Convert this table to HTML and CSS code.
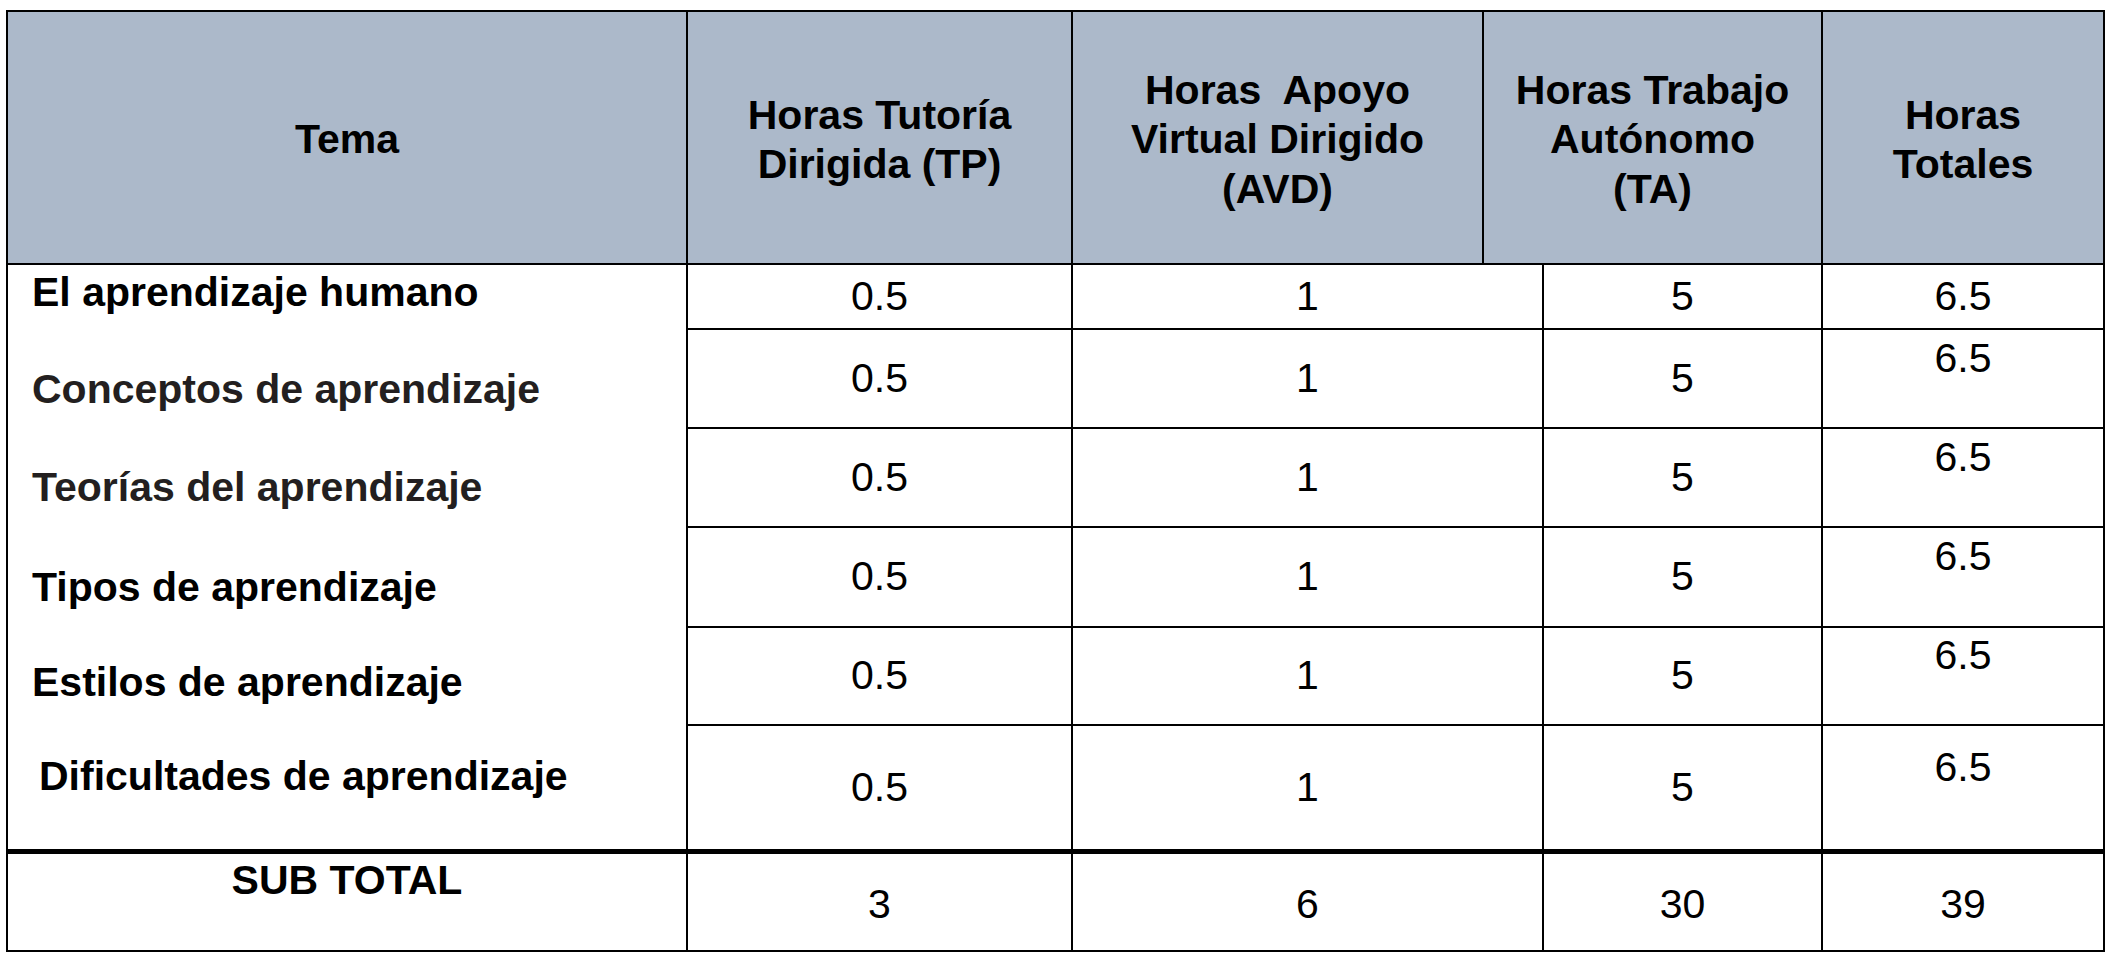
FILE: index.html
```html
<!DOCTYPE html>
<html lang="es">
<head>
<meta charset="utf-8">
<title>Distribución de horas</title>
<link rel="stylesheet" href="styles.css">
</head>
<body>
<div class="wrap">
<table class="plan">
  <colgroup>
    <col class="c1"><col class="c2"><col class="c3"><col class="c3b"><col class="c4"><col class="c5">
  </colgroup>
  <thead>
    <tr class="rh">
      <th>Tema</th>
      <th>Horas Tutoría<br>Dirigida (TP)</th>
      <th>Horas&nbsp; Apoyo<br>Virtual Dirigido<br>(AVD)</th>
      <th colspan="2">Horas Trabajo<br>Autónomo<br>(TA)</th>
      <th>Horas<br>Totales</th>
    </tr>
  </thead>
  <tbody>
    <tr class="r1">
      <td class="topic t1">El aprendizaje humano</td>
      <td>0.5</td><td colspan="2">1</td><td>5</td><td>6.5</td>
    </tr>
    <tr class="r2">
      <td class="topic t2 gray">Conceptos de aprendizaje</td>
      <td>0.5</td><td colspan="2">1</td><td>5</td><td class="hi">6.5</td>
    </tr>
    <tr class="r3">
      <td class="topic t3 gray">Teorías del aprendizaje</td>
      <td>0.5</td><td colspan="2">1</td><td>5</td><td class="hi">6.5</td>
    </tr>
    <tr class="r4">
      <td class="topic t4">Tipos de aprendizaje</td>
      <td>0.5</td><td colspan="2">1</td><td>5</td><td class="hi">6.5</td>
    </tr>
    <tr class="r5">
      <td class="topic t5">Estilos de aprendizaje</td>
      <td>0.5</td><td colspan="2">1</td><td>5</td><td class="hi">6.5</td>
    </tr>
    <tr class="r6">
      <td class="topic t6">Dificultades de aprendizaje</td>
      <td>0.5</td><td colspan="2">1</td><td>5</td><td class="hi">6.5</td>
    </tr>
    <tr class="rs">
      <td class="subtotal">SUB TOTAL</td>
      <td>3</td><td colspan="2">6</td><td>30</td><td>39</td>
    </tr>
  </tbody>
</table>
</div>
</body>
</html>
```

FILE: styles.css
```css
html, body {
  margin: 0;
  padding: 0;
  background: #ffffff;
}

body {
  font-family: "Liberation Sans", Arial, Helvetica, sans-serif;
  color: #000000;
}

.wrap {
  padding: 10px 0 0 6px;
}

.plan {
  border-collapse: collapse;
  table-layout: fixed;
  width: 2097px;
}

.c1 { width: 680px; }
.c2 { width: 385px; }
.c3 { width: 411px; }
.c3b { width: 60px; }
.c4 { width: 279px; }
.c5 { width: 282px; }

.plan th,
.plan td {
  border: 2px solid #000000;
  padding: 0;
  font-size: 41px;
  line-height: 1.2;
  text-align: center;
  vertical-align: middle;
  font-weight: normal;
}

.plan th {
  background: #acb9ca;
  font-weight: bold;
  padding-top: 5px;
}

.rh { height: 253px; }
.r1 { height: 65px; }
.r2 { height: 99px; }
.r3 { height: 99px; }
.r4 { height: 100px; }
.r5 { height: 98px; }
.r6 { height: 126px; }
.rs { height: 100px; }

.plan td.topic {
  text-align: left;
  font-weight: bold;
  border-top: none;
  border-bottom: none;
  padding-left: 24px;
}

.plan td.gray { color: #231f20; }

.plan td.t1 { padding-bottom: 8px; }
.plan td.t2 { padding-top: 22px; }
.plan td.t3 { padding-top: 20px; }
.plan td.t4 { padding-top: 22px; }
.plan td.t5 { padding-top: 14px; }
.plan td.t6 { padding-bottom: 20px; padding-left: 31px; }

.plan td.hi { padding-bottom: 40px; }

.rs td {
  border-top: 5px solid #000000;
  padding-top: 5px;
}

.plan td.subtotal {
  font-weight: bold;
  padding-top: 0;
  padding-bottom: 42px;
}
```
